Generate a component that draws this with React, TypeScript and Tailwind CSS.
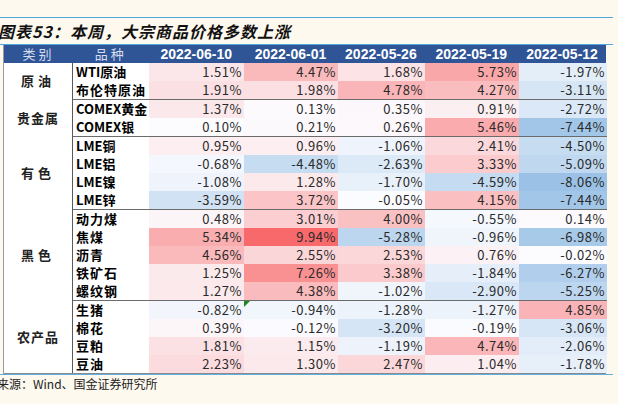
import React from "react";

type Row = { name: string; vals: number[]; flag?: number };
type Group = { cat: string; rows: Row[] };

const dates = ["2022-06-10", "2022-06-01", "2022-05-26", "2022-05-19", "2022-05-12"];

const groups: Group[] = [
  {
    cat: "原油",
    rows: [
      { name: "WTI原油", vals: [1.51, 4.47, 1.68, 5.73, -1.97] },
      { name: "布伦特原油", vals: [1.91, 1.98, 4.78, 4.27, -3.11] },
    ],
  },
  {
    cat: "贵金属",
    rows: [
      { name: "COMEX黄金", vals: [1.37, 0.13, 0.35, 0.91, -2.72] },
      { name: "COMEX银", vals: [0.1, 0.21, 0.26, 5.46, -7.44] },
    ],
  },
  {
    cat: "有色",
    rows: [
      { name: "LME铜", vals: [0.95, 0.96, -1.06, 2.41, -4.5] },
      { name: "LME铝", vals: [-0.68, -4.48, -2.63, 3.33, -5.09] },
      { name: "LME镍", vals: [-1.08, 1.28, -1.7, -4.59, -8.06] },
      { name: "LME锌", vals: [-3.59, 3.72, -0.05, 4.15, -7.44] },
    ],
  },
  {
    cat: "黑色",
    rows: [
      { name: "动力煤", vals: [0.48, 3.01, 4.0, -0.55, 0.14] },
      { name: "焦煤", vals: [5.34, 9.94, -5.28, -0.96, -6.98] },
      { name: "沥青", vals: [4.56, 2.55, 2.53, 0.76, -0.02] },
      { name: "铁矿石", vals: [1.25, 7.26, 3.38, -1.84, -6.27] },
      { name: "螺纹钢", vals: [1.27, 4.38, -1.02, -2.9, -5.25] },
    ],
  },
  {
    cat: "农产品",
    rows: [
      { name: "生猪", vals: [-0.82, -0.94, -1.28, -1.27, 4.85], flag: 1 },
      { name: "棉花", vals: [0.39, -0.12, -3.2, -0.19, -3.06] },
      { name: "豆粕", vals: [1.81, 1.15, -1.19, 4.74, -2.06] },
      { name: "豆油", vals: [2.23, 1.3, 2.47, 1.04, -1.78] },
    ],
  },
];

const colW = ["w-[95px]", "w-[94px]", "w-[87px]", "w-[94px]", "w-[88px]"];

// excel style 3-colour scale: blue -> white -> red
const heat = (v: number) => {
  const base = [252, 252, 255];
  const end = v >= 0 ? [248, 105, 107] : [155, 194, 230];
  const t = Math.min(1, v >= 0 ? v / 9.94 : -v / 8.06);
  const c = base.map((b, i) => Math.round(b + (end[i] - b) * t));
  return `rgb(${c[0]}, ${c[1]}, ${c[2]})`;
};

const fmt = (v: number) => v.toFixed(2) + "%";

export default function App() {
  return (
    <div className="w-[618px] h-[404px] overflow-hidden bg-[#fdf9ee] pt-[17px] font-['Noto_Sans_CJK_SC',sans-serif] text-[#222]">
      <div className="w-[613px] border-t border-[#4ea6da]" />
      <div className="w-[613px] h-[26px] flex items-center -ml-[2px] text-[16px] font-bold italic tracking-[1px] leading-none text-[#111]">
        图表53：本周，大宗商品价格多数上涨
      </div>
      <div className="w-[613px] border-t border-[#4ea6da]" />

      <div className="ml-[3px] w-[603px] border-l border-[#9a9a9a]">
        {/* header */}
        <div className="flex h-[18px] bg-[#2f5597] text-white items-center">
          <div className="w-[69px] text-center text-[13px] tracking-[3px] text-[#d6deef]">类别</div>
          <div className="w-[76px] text-center text-[13px] tracking-[3px] text-[#d6deef]">品种</div>
          {dates.map((d, i) => (
            <div key={d} className={`${colW[i]} text-center text-[14px] font-bold font-['Liberation_Sans',sans-serif]`}>
              {d}
            </div>
          ))}
        </div>

        {groups.map((g, gi) => (
          <div key={g.cat} className="flex">
            <div
              className={`w-[69px] shrink-0 flex items-center justify-center border-r border-[#5a5a5a] bg-white text-[13px] font-bold ${
                g.cat.length === 2 ? "tracking-[4px]" : "tracking-[1px]"
              }`}
            >
              {g.cat}
            </div>
            <div className={`flex-1 ${gi > 0 ? "border-t border-[#6b6b6b]" : ""}`}>
              {g.rows.map((r) => (
                <div key={r.name} className="flex h-[18px]">
                  <div
                    className={`w-[76px] shrink-0 bg-white pl-[3px] flex items-center text-[13px] font-bold text-black whitespace-nowrap overflow-hidden ${
                      /[A-Z]/.test(r.name) ? "tracking-normal" : "tracking-[1px]"
                    }`}
                  >
                    {r.name}
                  </div>
                  {r.vals.map((v, i) => (
                    <div
                      key={i}
                      className={`${colW[i]} relative shrink-0 flex items-center justify-end pr-[2px] text-[13px] tracking-[0.5px] text-[#2a2a2a]`}
                      style={{ backgroundColor: heat(v) }}
                    >
                      {r.flag === i && (
                        <span className="absolute left-0 top-0 w-0 h-0 border-t-[6px] border-r-[6px] border-t-[#1a8a1a] border-r-transparent" />
                      )}
                      {fmt(v)}
                    </div>
                  ))}
                </div>
              ))}
            </div>
          </div>
        ))}
        <div className="border-t border-[#8a8a8a]" />
      </div>
      <div className="w-[613px] border-t border-[#5db0e0]" />

      <div className="-ml-[3px] mt-[3px] text-[12px] text-[#222] leading-none">
        来源：Wind、国金证券研究所
      </div>
    </div>
  );
}
